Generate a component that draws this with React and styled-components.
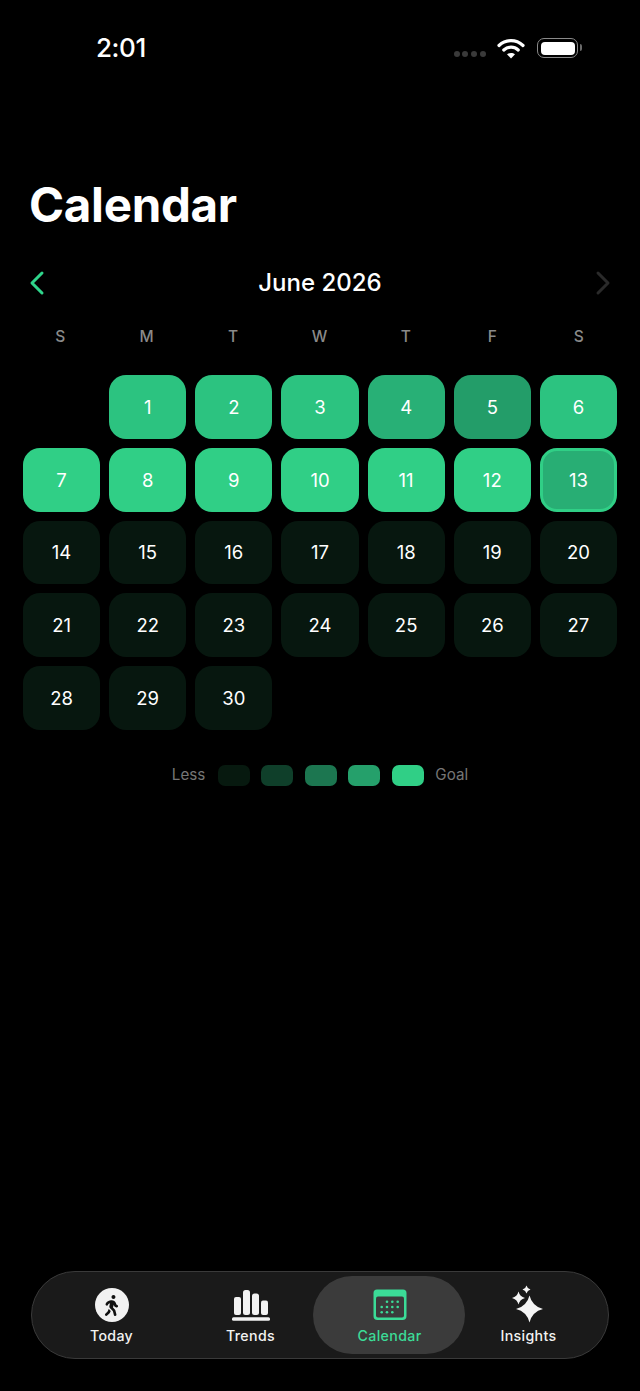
import React from "react";
import styled, { createGlobalStyle } from "styled-components";
import { FaWalking } from "react-icons/fa";

const GlobalStyle = createGlobalStyle`
  html, body {
    margin: 0;
    padding: 0;
    background: #000;
  }
  body {
    font-family: Inter, "Liberation Sans", sans-serif;
    color: #fff;
  }
  * { box-sizing: border-box; }
`;

const Page = styled.div`
  display: flex;
  flex-direction: column;
  width: 640px;
  height: 1391px;
  background: #000;
`;

const StatusBar = styled.div`
  display: flex;
  align-items: center;
  justify-content: space-between;
  height: 30px;
  margin-top: 33px;
  padding: 0 62px 0 96px;
`;

const Clock = styled.div`
  font-size: 26px;
  font-weight: 500;
  letter-spacing: -0.4px;
  line-height: 30px;
`;

const StatusIcons = styled.div`
  display: flex;
  align-items: center;
`;

const SignalDots = styled.div`
  display: flex;
  gap: 2.8px;
  margin: 12px 11px 0 0;
`;

const Dot = styled.span`
  width: 6px;
  height: 6px;
  border-radius: 50%;
  background: #3a3a3a;
`;

const Battery = styled.div`
  position: relative;
  width: 41px;
  height: 20px;
  margin-left: 12px;
  padding: 2.5px;
  border: 1.5px solid #8a8a8a;
  border-radius: 7px;
  &::after {
    content: "";
    position: absolute;
    right: -5px;
    top: 5px;
    width: 2.5px;
    height: 7px;
    border-radius: 0 2px 2px 0;
    background: #6a6a6a;
  }
`;

const BatteryFill = styled.div`
  width: 100%;
  height: 100%;
  border-radius: 4px;
  background: #fff;
`;

const Title = styled.h1`
  margin: 114px 0 0 29px;
  font-size: 47.5px;
  font-weight: 700;
  line-height: 56px;
  letter-spacing: -0.3px;
`;

const MonthRow = styled.div`
  display: flex;
  align-items: center;
  justify-content: space-between;
  height: 32px;
  margin-top: 34px;
  padding: 0 26px;
`;

const MonthLabel = styled.div`
  font-size: 24px;
  font-weight: 500;
  line-height: 32px;
`;

const Chevron = styled.svg`
  display: block;
  width: 22px;
  height: 26px;
  fill: none;
  stroke: ${(p) => p.$color};
  stroke-width: 3;
  stroke-linecap: round;
  stroke-linejoin: round;
`;

const Weekdays = styled.div`
  display: grid;
  grid-template-columns: repeat(7, 1fr);
  margin-top: 28px;
  padding: 0 18px 0 17px;
`;

const Weekday = styled.div`
  text-align: center;
  font-size: 15.5px;
  font-weight: 500;
  line-height: 20px;
  color: #8a8a8a;
`;

const Grid = styled.div`
  display: grid;
  grid-template-columns: repeat(7, 1fr);
  grid-auto-rows: 63.8px;
  gap: 9px;
  margin-top: 28px;
  padding: 0 23px;
`;

const Cell = styled.div`
  display: flex;
  align-items: center;
  justify-content: center;
  border-radius: 17px;
  font-size: 18.5px;
  font-weight: 400;
  color: #fff;
  background: ${(p) => p.$bg};
  border: ${(p) => (p.$today ? "3px solid #30cf86" : "none")};
`;

const Legend = styled.div`
  display: flex;
  align-items: center;
  justify-content: center;
  gap: 11.5px;
  margin-top: 35px;
`;

const LegendText = styled.span`
  font-size: 15.2px;
  line-height: 20px;
  color: #767676;
  &:first-child { margin-right: 1px; }
`;

const Swatch = styled.span`
  width: 32px;
  height: 21px;
  border-radius: 7px;
  background: ${(p) => p.$bg};
`;

const TabBar = styled.nav`
  display: grid;
  grid-template-columns: repeat(4, 1fr);
  width: 578px;
  height: 88px;
  margin: auto 0 32px 31px;
  padding: 4px 10px;
  border: 1px solid #3a3a3a;
  border-radius: 44px;
  background: #1a1a1a;
`;

const Tab = styled.div`
  position: relative;
  display: flex;
  flex-direction: column;
  align-items: center;
  justify-content: flex-start;
  padding-top: 12px;
  color: ${(p) => (p.$active ? "#3bdc97" : "#f2f2f2")};
  &::before {
    content: "";
    display: ${(p) => (p.$active ? "block" : "none")};
    position: absolute;
    inset: 0 -5.5px 0 -7.5px;
    border-radius: 39px;
    background: #3b3b3b;
  }
`;

const TabIcon = styled.div`
  position: relative;
  display: flex;
  align-items: center;
  justify-content: center;
  width: 40px;
  height: 34px;
`;

const TabLabel = styled.div`
  position: relative;
  margin-top: 5px;
  font-size: 14.2px;
  font-weight: 500;
  line-height: 18px;
  letter-spacing: 0.35px;
`;

const WalkCircle = styled.div`
  display: flex;
  align-items: center;
  justify-content: center;
  width: 34px;
  height: 34px;
  border-radius: 50%;
  background: #f2f2f2;
  color: #111;
  font-size: 21px;
`;

const GOAL = "#30cf86";
const EMPTY = "#07170f";
const dayColors = {
  1: "#2cc380", 2: "#2cc380", 3: "#2cc380", 4: "#28b076", 5: "#239d69", 6: "#2cc380",
  7: GOAL, 8: GOAL, 9: GOAL, 10: GOAL, 11: GOAL, 12: GOAL, 13: "#28ae74",
};
const days = Array.from({ length: 30 }, (_, i) => i + 1);
const weekdays = ["S", "M", "T", "W", "T", "F", "S"];
const levels = ["#07190f", "#0f3f2a", "#1c7650", "#25a06b", GOAL];

const Wifi = () => (
  <svg width="28" height="21" viewBox="0 0 28 21" fill="none" stroke="#fff" strokeWidth="3.2" strokeLinecap="round">
    <path d="M2 7.5C9 1 19 1 26 7.5" />
    <path d="M6.8 12C11 8.2 17 8.2 21.2 12" />
    <path d="M14 20.5l-4-4.2c2.3-1.8 5.7-1.8 8 0z" fill="#fff" stroke="none" />
  </svg>
);

const TrendsIcon = () => (
  <svg width="38" height="32" viewBox="0 0 38 32" fill="#f2f2f2">
    <rect x="2" y="8" width="7" height="18" rx="2" />
    <rect x="11" y="1" width="7" height="25" rx="2.5" />
    <rect x="20" y="4.500" width="7" height="21.500" rx="2.500" />
    <rect x="29" y="11.500" width="7" height="14.500" rx="2" />
    <rect x="0" y="28.300" width="38" height="3.400" rx="1.500" />
  </svg>
);

const calendarDots = [
  [14, 12.7], [19.3, 12.7], [24.7, 12.7],
  [8.7, 18], [14, 18], [19.3, 18], [24.7, 18],
  [8.7, 23.3], [14, 23.3], [19.3, 23.3],
];

const CalendarIcon = () => (
  <svg width="34" height="32" viewBox="0 0 34 32">
    <path d="M4 0.500h26a3.500 3.500 0 0 1 3.500 3.500V27a4 4 0 0 1-4 4H4.500a4 4 0 0 1-4-4V4A3.500 3.500 0 0 1 4 0.500z" fill="#3bdc97" />
    <rect x="3" y="7.500" width="28" height="21" rx="2" fill="#3b3b3b" />
    {calendarDots.map(([x, y]) => (
      <circle key={`${x}-${y}`} cx={x} cy={y} r="1.300" fill="#3bdc97" />
    ))}
  </svg>
);

const star = (cx, cy, r) => {
  const k = r * 0.2;
  return `M${cx} ${cy - r}Q${cx + k} ${cy - k} ${cx + r} ${cy}Q${cx + k} ${cy + k} ${cx} ${cy + r}Q${cx - k} ${cy + k} ${cx - r} ${cy}Q${cx - k} ${cy - k} ${cx} ${cy - r}Z`;
};

const SparkleIcon = () => (
  <svg width="36" height="40" viewBox="0 0 36 40" fill="#f5f5f5">
    <path d={star(18.5, 24, 13.5)} />
    <path d={star(7.5, 13, 6.5)} />
    <path d={star(15.5, 4.5, 4)} />
  </svg>
);

export default function App() {
  return (
    <Page>
      <GlobalStyle />
      <StatusBar>
        <Clock>2:01</Clock>
        <StatusIcons>
          <SignalDots>
            <Dot /><Dot /><Dot /><Dot />
          </SignalDots>
          <Wifi />
          <Battery><BatteryFill /></Battery>
        </StatusIcons>
      </StatusBar>

      <Title>Calendar</Title>

      <MonthRow>
        <Chevron viewBox="0 0 22 26" $color="#2fd58b">
          <polyline points="16,3 6,13 16,23" />
        </Chevron>
        <MonthLabel>June 2026</MonthLabel>
        <Chevron viewBox="0 0 22 26" $color="#2a2a2a">
          <polyline points="6,3 16,13 6,23" />
        </Chevron>
      </MonthRow>

      <Weekdays>
        {weekdays.map((d, i) => <Weekday key={i}>{d}</Weekday>)}
      </Weekdays>

      <Grid>
        <div />
        {days.map((d) => (
          <Cell key={d} $bg={dayColors[d] || EMPTY} $today={d === 13}>{d}</Cell>
        ))}
      </Grid>

      <Legend>
        <LegendText>Less</LegendText>
        {levels.map((c) => <Swatch key={c} $bg={c} />)}
        <LegendText>Goal</LegendText>
      </Legend>

      <TabBar>
        <Tab>
          <TabIcon><WalkCircle><FaWalking /></WalkCircle></TabIcon>
          <TabLabel>Today</TabLabel>
        </Tab>
        <Tab>
          <TabIcon><TrendsIcon /></TabIcon>
          <TabLabel>Trends</TabLabel>
        </Tab>
        <Tab $active>
          <TabIcon><CalendarIcon /></TabIcon>
          <TabLabel>Calendar</TabLabel>
        </Tab>
        <Tab>
          <TabIcon><SparkleIcon /></TabIcon>
          <TabLabel>Insights</TabLabel>
        </Tab>
      </TabBar>
    </Page>
  );
}
